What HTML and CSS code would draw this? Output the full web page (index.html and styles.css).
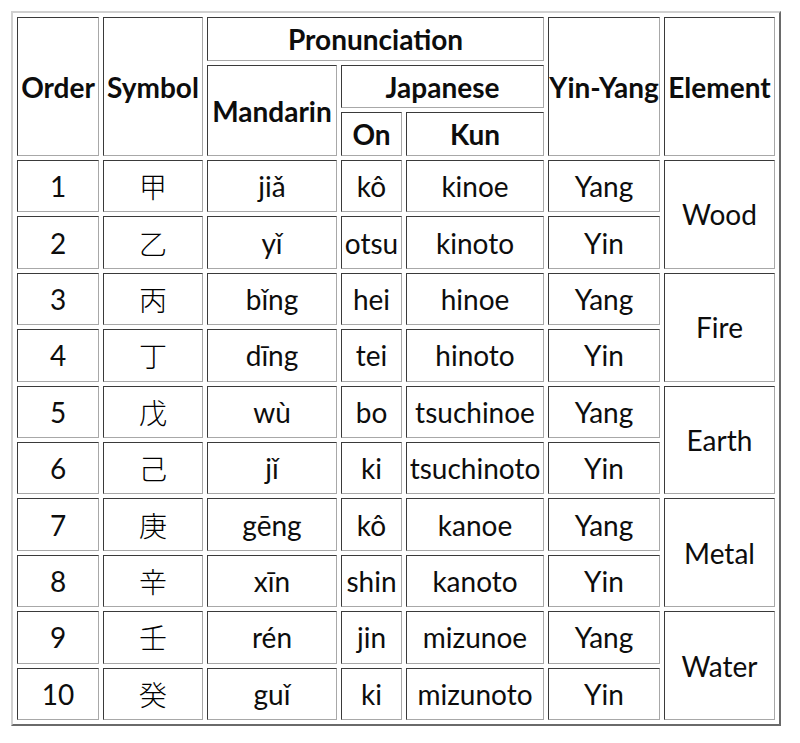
FILE: index.html
```html
<!DOCTYPE html>
<html>
<head>
<meta charset="utf-8">
<link rel="stylesheet" href="styles.css">
</head>
<body>
<table class="stems">
  <thead>
    <tr class="h1">
      <th rowspan="3" class="c-order">Order</th>
      <th rowspan="3" class="c-symbol">Symbol</th>
      <th colspan="3">Pronunciation</th>
      <th rowspan="3" class="c-yy">Yin-Yang</th>
      <th rowspan="3" class="c-el">Element</th>
    </tr>
    <tr class="h2">
      <th rowspan="2" class="c-man">Mandarin</th>
      <th colspan="2">Japanese</th>
    </tr>
    <tr class="h3">
      <th class="c-on">On</th>
      <th class="c-kun">Kun</th>
    </tr>
  </thead>
  <tbody>
    <tr><td>1</td><td class="sym">甲</td><td>jiǎ</td><td>kô</td><td>kinoe</td><td>Yang</td><td rowspan="2">Wood</td></tr>
    <tr><td>2</td><td class="sym">乙</td><td>yǐ</td><td>otsu</td><td>kinoto</td><td>Yin</td></tr>
    <tr><td>3</td><td class="sym">丙</td><td>bǐng</td><td>hei</td><td>hinoe</td><td>Yang</td><td rowspan="2">Fire</td></tr>
    <tr><td>4</td><td class="sym">丁</td><td>dīng</td><td>tei</td><td>hinoto</td><td>Yin</td></tr>
    <tr><td>5</td><td class="sym">戊</td><td>wù</td><td>bo</td><td>tsuchinoe</td><td>Yang</td><td rowspan="2">Earth</td></tr>
    <tr><td>6</td><td class="sym">己</td><td>jǐ</td><td>ki</td><td>tsuchinoto</td><td>Yin</td></tr>
    <tr><td>7</td><td class="sym">庚</td><td>gēng</td><td>kô</td><td>kanoe</td><td>Yang</td><td rowspan="2">Metal</td></tr>
    <tr><td>8</td><td class="sym">辛</td><td>xīn</td><td>shin</td><td>kanoto</td><td>Yin</td></tr>
    <tr><td>9</td><td class="sym">壬</td><td>rén</td><td>jin</td><td>mizunoe</td><td>Yang</td><td rowspan="2">Water</td></tr>
    <tr><td>10</td><td class="sym">癸</td><td>guǐ</td><td>ki</td><td>mizunoto</td><td>Yin</td></tr>
  </tbody>
</table>
</body>
</html>
```

FILE: styles.css
```css
html, body {
  margin: 0;
  padding: 0;
  background: #ffffff;
}

.stems {
  margin: 11px 0 0 11px;
  border-collapse: separate;
  border-spacing: 4px;
  border-style: solid;
  border-width: 2px;
  border-color: #d0d0d0 #6a6a6a #6a6a6a #d0d0d0;
  font-family: Lato, "Liberation Sans", sans-serif;
  font-size: 28px;
  color: #0d0d0d;
}

.stems th,
.stems td {
  box-sizing: border-box;
  padding: 0;
  border-style: solid;
  border-width: 1px;
  border-color: #3a3a3a #a8a8a8 #a8a8a8 #3a3a3a;
  text-align: center;
  vertical-align: middle;
  white-space: nowrap;
}

.stems th {
  font-weight: 700;
}

.c-order { width: 82px; }
.c-symbol { width: 100px; }
.c-man { width: 130px; }
.c-on { width: 61px; }
.c-kun { width: 138px; }
.c-yy { width: 112px; }
.c-el { width: 111px; }

.h1 { height: 44px; }
.h2 { height: 43px; }
.h3 { height: 44px; }

.stems tbody tr { height: 52.4px; }

.stems td.sym {
  font-family: "Noto Sans CJK JP", "Noto Sans CJK SC", sans-serif;
  font-weight: 300;
  font-size: 28px;
  line-height: 1;
  color: #000000;
}
```
